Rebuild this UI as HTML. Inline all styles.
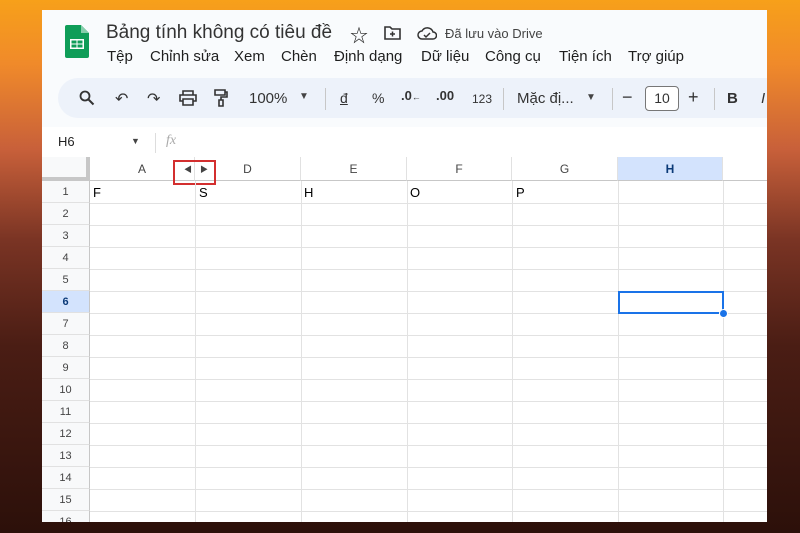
<!DOCTYPE html>
<html><head><meta charset="utf-8"><style>
*{margin:0;padding:0;box-sizing:border-box}
html,body{width:800px;height:533px;overflow:hidden}
body{position:relative;font-family:"Liberation Sans","Noto Sans CJK SC",sans-serif;
background:linear-gradient(180deg,#f7a01a 0%,#f08a2a 12%,#c8603a 28%,#7a3424 45%,#4a1d14 65%,#2c100a 100%);}
.panel{position:absolute;left:42px;top:10px;width:725px;height:512px;background:#f9fbfd;overflow:hidden}
.t{position:absolute;white-space:nowrap;color:#1f1f1f}
.m{position:absolute;top:38px;font-size:15px;color:#1f1f1f;white-space:nowrap}
.pill{position:absolute;left:16px;top:68px;width:740px;height:40px;border-radius:20px;background:#edf2fa}
.grid{position:absolute;left:0;top:147px;width:725px;height:365px;background:#fff;overflow:hidden}
.ch{position:absolute;top:0;height:24px;border-right:1px solid #e1e1e1;border-bottom:1px solid #c7c7c7;font-size:12px;color:#444;text-align:center;line-height:24px;background:#f8f9fa}
.rh{position:absolute;left:0;width:48px;height:22px;border-bottom:1px solid #e1e1e1;border-right:1px solid #c7c7c7;font-size:11px;color:#444;text-align:center;line-height:22px;background:#f8f9fa}
.hl{position:absolute;left:48px;width:677px;height:1px;background:#e2e2e2}
.vl{position:absolute;top:24px;width:1px;height:400px;background:#e2e2e2}
.c{position:absolute;font-size:13px;color:#000}
</style></head><body>
<div class="panel">
 <svg style="position:absolute;left:23px;top:15px" width="24" height="33" viewBox="0 0 24 33"><path d="M2 0h14l8 8v23a2 2 0 0 1-2 2H2a2 2 0 0 1-2-2V2a2 2 0 0 1 2-2z" fill="#0f9d58"/><path d="M16 0v8h8z" fill="#87ceac"/><rect x="5" y="14" width="14" height="10" fill="#fff"/><rect x="6.5" y="15.5" width="5" height="3" fill="#0f9d58"/><rect x="12.5" y="15.5" width="5" height="3" fill="#0f9d58"/><rect x="6.5" y="19.5" width="5" height="3" fill="#0f9d58"/><rect x="12.5" y="19.5" width="5" height="3" fill="#0f9d58"/></svg>
 <div class="t" style="left:64px;top:12px;font-size:19px;color:#333">Bảng tính không có tiêu đề</div>
 <div class="t" style="left:308px;top:12px;font-size:18px">☆</div>
 <svg style="position:absolute;left:342px;top:16px" width="17" height="14" viewBox="0 0 17 14"><path d="M1 1h5l2 2h8v10H1z" fill="none" stroke="#333" stroke-width="1.6"/><path d="M8.5 5.5v5M6 8h5" stroke="#333" stroke-width="1.5"/></svg>
 <svg style="position:absolute;left:375px;top:16px" width="20" height="14" viewBox="0 0 20 14"><path d="M5 13a4 4 0 0 1 0-8 6 6 0 0 1 11 1 3.5 3.5 0 0 1 0 7z" fill="none" stroke="#333" stroke-width="1.5"/><path d="M7 9l2 2 4-4" fill="none" stroke="#333" stroke-width="1.5"/></svg>
 <div class="t" style="left:403px;top:16px;font-size:13px;color:#444">Đã lưu vào Drive</div>
 <div class="m" style="left:65px">Tệp</div>
 <div class="m" style="left:108px">Chỉnh sửa</div>
 <div class="m" style="left:192px">Xem</div>
 <div class="m" style="left:239px">Chèn</div>
 <div class="m" style="left:292px">Định dạng</div>
 <div class="m" style="left:379px">Dữ liệu</div>
 <div class="m" style="left:443px">Công cụ</div>
 <div class="m" style="left:517px">Tiện ích</div>
 <div class="m" style="left:586px">Trợ giúp</div>
 <div class="pill"></div>
 <svg style="position:absolute;left:37px;top:80px" width="16" height="16" viewBox="0 0 16 16"><circle cx="6" cy="6" r="4.5" fill="none" stroke="#333" stroke-width="1.8"/><path d="M9.5 9.5l5 5" stroke="#333" stroke-width="2"/></svg>
 <div class="t" style="left:73px;top:79px;font-size:16px;color:#333">↶</div>
 <div class="t" style="left:105px;top:79px;font-size:16px;color:#333">↷</div>
 <svg style="position:absolute;left:137px;top:80px" width="18" height="16" viewBox="0 0 18 16"><path d="M4 5V1h10v4M4 11H1V5h16v6h-3M4 9h10v6H4z" fill="none" stroke="#333" stroke-width="1.6"/></svg>
 <svg style="position:absolute;left:172px;top:79px" width="14" height="18" viewBox="0 0 14 18"><path d="M1 1h10v5H1zM11 3h2v5H7v3M5 11h4v6H5z" fill="none" stroke="#333" stroke-width="1.6"/></svg>
 <div class="t" style="left:207px;top:80px;font-size:15px;color:#333">100%</div>
 <div class="t" style="left:257px;top:81px;font-size:10px;color:#444">▼</div>
 <div style="position:absolute;left:283px;top:78px;width:1px;height:22px;background:#c7c7c7"></div>
 <div class="t" style="left:298px;top:80px;font-size:14px;color:#333;text-decoration:underline">đ</div>
 <div class="t" style="left:330px;top:80px;font-size:14px;color:#333">%</div>
 <div class="t" style="left:359px;top:78px;font-size:13px;color:#333;font-weight:bold">.0<span style="font-size:9px">←</span></div>
 <div class="t" style="left:394px;top:78px;font-size:13px;color:#333;font-weight:bold">.00</div>
 <div class="t" style="left:430px;top:82px;font-size:12px;color:#333">123</div>
 <div style="position:absolute;left:461px;top:78px;width:1px;height:22px;background:#c7c7c7"></div>
 <div class="t" style="left:475px;top:80px;font-size:15px;color:#333">Mặc đị...</div>
 <div class="t" style="left:544px;top:82px;font-size:10px;color:#444">▼</div>
 <div style="position:absolute;left:570px;top:78px;width:1px;height:22px;background:#c7c7c7"></div>
 <div class="t" style="left:580px;top:77px;font-size:18px;color:#333">−</div>
 <div style="position:absolute;left:603px;top:76px;width:34px;height:25px;border:1px solid #777;border-radius:4px;background:#fff;font-size:14px;text-align:center;line-height:23px;color:#333">10</div>
 <div class="t" style="left:646px;top:77px;font-size:18px;color:#333">+</div>
 <div style="position:absolute;left:672px;top:78px;width:1px;height:22px;background:#c7c7c7"></div>
 <div class="t" style="left:685px;top:80px;font-size:15px;font-weight:bold;color:#333">B</div>
 <div class="t" style="left:719px;top:80px;font-size:15px;font-style:italic;color:#333">I</div>
 <div style="position:absolute;left:0;top:117px;width:725px;height:30px;background:#fff"></div>
 <div class="t" style="left:16px;top:124px;font-size:13px">H6</div>
 <div class="t" style="left:89px;top:126px;font-size:9px;color:#444">▼</div>
 <div style="position:absolute;left:113px;top:123px;width:1px;height:20px;background:#ddd"></div>
 <div class="t" style="left:124px;top:123px;font-size:14px;color:#aaa;font-style:italic;font-family:'Liberation Serif',serif">fx</div>
 <div class="grid">
  <div class="ch" style="left:0;width:48px;border-right:4px solid #c7c7c7;border-bottom:4px solid #c7c7c7;height:24px"></div>
  <div class="ch" style="left:48px;width:105px;background:#fff">A</div>
  <div class="ch" style="left:153px;width:106px;background:#fff">D</div>
  <div class="ch" style="left:259px;width:106px;background:#fff">E</div>
  <div class="ch" style="left:365px;width:105px;background:#fff">F</div>
  <div class="ch" style="left:470px;width:106px;background:#fff">G</div>
  <div class="ch" style="left:576px;width:105px;background:#d3e3fd;font-weight:bold;color:#0b3a78">H</div>
  <div class="ch" style="left:681px;width:60px;background:#fff"></div>
  <div style="position:absolute;left:131px;top:3px;width:43px;height:25px;border:2px solid #d32f2f"></div>
  <div class="t" style="left:142px;top:7px;font-size:8px;color:#444">◀</div>
  <div class="t" style="left:158px;top:7px;font-size:8px;color:#444">▶</div>
  <div class="vl" style="left:153px"></div><div class="vl" style="left:259px"></div><div class="vl" style="left:365px"></div><div class="vl" style="left:470px"></div><div class="vl" style="left:576px"></div><div class="vl" style="left:681px"></div>
  <div class="rh" style="top:24px">1</div><div class="rh" style="top:46px">2</div><div class="rh" style="top:68px">3</div><div class="rh" style="top:90px">4</div><div class="rh" style="top:112px">5</div><div class="rh" style="top:134px;background:#d3e3fd;font-weight:bold;color:#0b3a78">6</div><div class="rh" style="top:156px">7</div><div class="rh" style="top:178px">8</div><div class="rh" style="top:200px">9</div><div class="rh" style="top:222px">10</div><div class="rh" style="top:244px">11</div><div class="rh" style="top:266px">12</div><div class="rh" style="top:288px">13</div><div class="rh" style="top:310px">14</div><div class="rh" style="top:332px">15</div><div class="rh" style="top:354px">16</div>
  <div class="hl" style="top:46px"></div><div class="hl" style="top:68px"></div><div class="hl" style="top:90px"></div><div class="hl" style="top:112px"></div><div class="hl" style="top:134px"></div><div class="hl" style="top:156px"></div><div class="hl" style="top:178px"></div><div class="hl" style="top:200px"></div><div class="hl" style="top:222px"></div><div class="hl" style="top:244px"></div><div class="hl" style="top:266px"></div><div class="hl" style="top:288px"></div><div class="hl" style="top:310px"></div><div class="hl" style="top:332px"></div><div class="hl" style="top:354px"></div>
  <div class="c" style="left:51px;top:28px">F</div>
  <div class="c" style="left:157px;top:28px">S</div>
  <div class="c" style="left:262px;top:28px">H</div>
  <div class="c" style="left:368px;top:28px">O</div>
  <div class="c" style="left:474px;top:28px">P</div>
  <div style="position:absolute;left:576px;top:134px;width:106px;height:23px;border:2px solid #1a73e8"></div>
  <div style="position:absolute;left:677px;top:152px;width:9px;height:9px;border-radius:50%;background:#1a73e8;border:1px solid #fff"></div>
 </div>
</div>
</body></html>
